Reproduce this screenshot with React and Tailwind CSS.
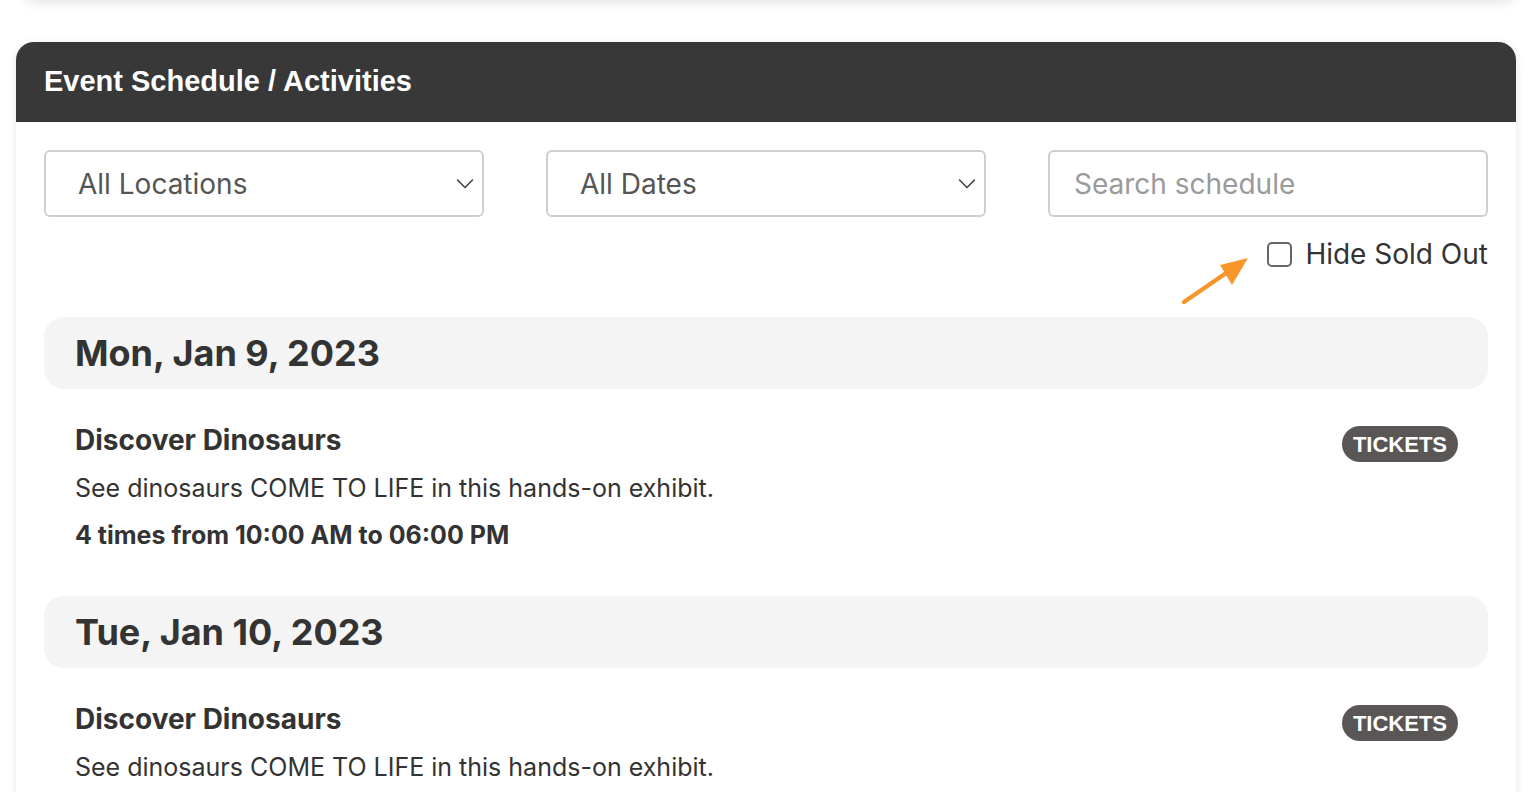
export default function App() {
  const inter = { fontFamily: "Inter, 'Noto Sans', sans-serif" };
  const Event = ({ times }) => (
    <div className="flex items-start justify-between pl-[31px] pr-[30px] pt-[35px] pb-[30px]">
      <div>
        <div className="text-[28px] font-bold text-[#333] leading-[32px]">Discover Dinosaurs</div>
        <div className="text-[25px] text-[#333] leading-[30px] mt-[17px]">See dinosaurs COME TO LIFE in this hands-on exhibit.</div>
        {times && (
          <div className="text-[25px] font-bold text-[#333] leading-[30px] mt-[17px]">4 times from 10:00 AM to 06:00 PM</div>
        )}
      </div>
      <div
        className="mt-[2px] h-[36px] px-[11px] rounded-full bg-[#5a5656] text-white text-[22px] font-bold flex items-center"
        style={{ fontFamily: "'Liberation Sans', Arial, sans-serif" }}
      >
        TICKETS
      </div>
    </div>
  );
  const Chevron = () => (
    <svg width="18" height="12" viewBox="0 0 18 12" fill="none" stroke="#444" strokeWidth="1.6" strokeLinecap="round" strokeLinejoin="round">
      <path d="M1.5 2 L9 9.5 L16.5 2" />
    </svg>
  );
  return (
    <div className="w-[1538px] h-[792px] overflow-hidden bg-white" style={inter}>
      <div className="ml-[20px] w-[1498px] h-[20px] -mt-[20px] bg-white rounded-b-[16px] shadow-[0_2px_12px_rgba(0,0,0,0.12)]" />
      <div className="ml-[16px] w-[1500px] mt-[42px] rounded-t-[18px] bg-white shadow-[0_2px_10px_rgba(0,0,0,0.1)]">
        <div className="h-[80px] bg-[#383838] rounded-t-[18px] flex items-center pl-[28px]">
          <span className="text-white text-[29px] font-bold" style={{ fontFamily: "'Liberation Sans', Arial, sans-serif" }}>
            Event Schedule / Activities
          </span>
        </div>
        <div className="px-[28px] pt-[28px]">
          <div className="grid grid-cols-3 gap-[62px]">
            <div className="h-[67px] border-2 border-[#cfcfcf] rounded-[6px] flex items-center justify-between pl-[32px] pr-[8px]">
              <span className="text-[28px] text-[#555]">All Locations</span>
              <Chevron />
            </div>
            <div className="h-[67px] border-2 border-[#cfcfcf] rounded-[6px] flex items-center justify-between pl-[32px] pr-[8px]">
              <span className="text-[28px] text-[#555]">All Dates</span>
              <Chevron />
            </div>
            <div className="h-[67px] border-2 border-[#cfcfcf] rounded-[6px] flex items-center pl-[24px]">
              <span className="text-[28px] text-[#9a9a9a]">Search schedule</span>
            </div>
          </div>
          <div className="relative flex justify-end items-center gap-[13px] mt-[22px] h-[30px]">
            <div className="w-[25px] h-[25px] border-2 border-[#666] rounded-[5px]" />
            <span className="text-[28px] text-[#333]">Hide Sold Out</span>
            <svg className="absolute left-[1136px] top-[16px]" width="72" height="52" viewBox="0 0 72 52">
              <line x1="4" y1="47" x2="52" y2="14" stroke="#f7962a" strokeWidth="4.5" strokeLinecap="round" />
              <polygon points="68,3 40,10 52,30" fill="#f7962a" />
            </svg>
          </div>
          <div className="mt-[48px] h-[72px] bg-[#f4f4f4] rounded-[20px] flex items-center pl-[31px]">
            <span className="text-[36px] font-bold text-[#333]">Mon, Jan 9, 2023</span>
          </div>
          <Event times />
          <div className="mt-[16px] h-[72px] bg-[#f4f4f4] rounded-[20px] flex items-center pl-[31px]">
            <span className="text-[36px] font-bold text-[#333]">Tue, Jan 10, 2023</span>
          </div>
          <Event times />
        </div>
      </div>
    </div>
  );
}
